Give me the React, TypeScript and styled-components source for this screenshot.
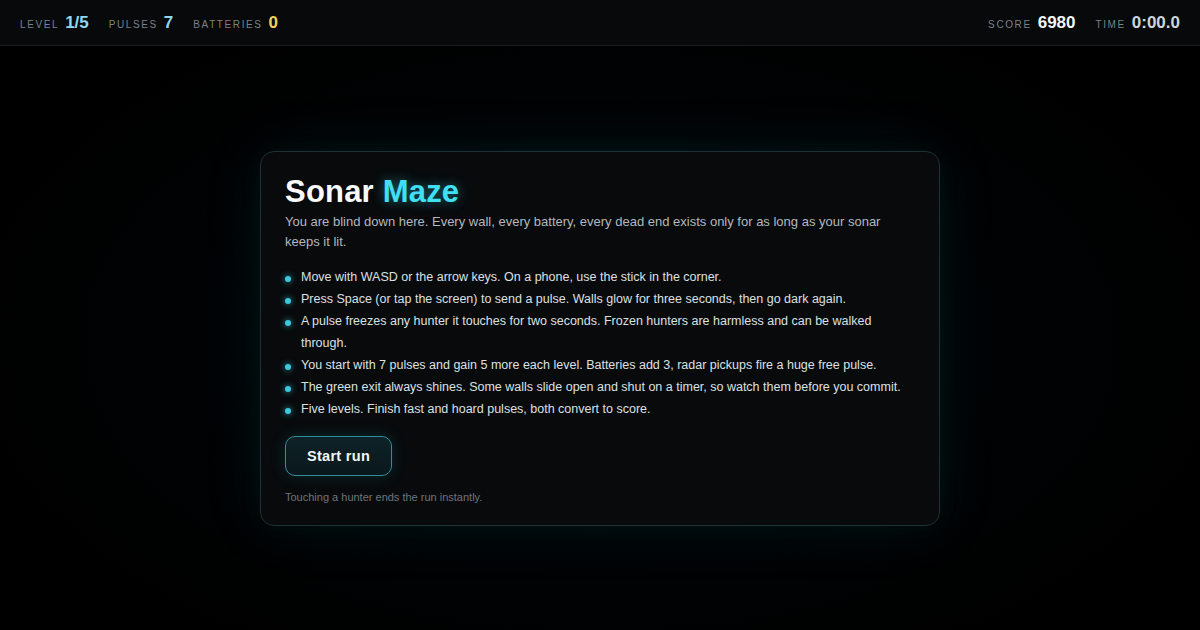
import styled, { createGlobalStyle } from 'styled-components';

const GlobalStyle = createGlobalStyle`
  html, body {
    margin: 0;
    padding: 0;
    height: 100%;
    background: #000;
  }
  body {
    font-family: "Liberation Sans", Arial, sans-serif;
    color: #e6e8ea;
  }
  #root {
    height: 100%;
  }
`;

const Page = styled.div`
  display: flex;
  flex-direction: column;
  height: 100vh;
  background: radial-gradient(ellipse at 50% 54%, #030a0c 0%, #010304 45%, #000 75%);
`;

const Hud = styled.header`
  display: flex;
  align-items: center;
  justify-content: space-between;
  height: 45px;
  padding: 0 20px;
  background: #07090b;
  border-bottom: 1px solid #1a1e22;
  flex-shrink: 0;
`;

const HudGroup = styled.div`
  display: flex;
  align-items: baseline;
  gap: 20px;
`;

const Stat = styled.div`
  display: flex;
  align-items: baseline;
  gap: 6px;
`;

const StatLabel = styled.span`
  font-size: 10px;
  letter-spacing: 1.6px;
  text-transform: uppercase;
  color: #7b8188;
`;

const StatValue = styled.span<{ $tone: 'cyan' | 'gold' | 'white' | 'soft' }>`
  font-size: 17px;
  font-weight: 700;
  color: ${(p) =>
    p.$tone === 'cyan' ? '#8ed8f2' : p.$tone === 'gold' ? '#f5cf5a' : p.$tone === 'white' ? '#f4f6f8' : '#cfd5db'};
`;

const Stage = styled.main`
  flex: 1;
  display: flex;
  align-items: center;
  justify-content: center;
`;

const Card = styled.section`
  width: 680px;
  box-sizing: border-box;
  padding: 22px 24px 21px;
  background: rgba(8, 10, 12, 0.96);
  border: 1px solid #1e3134;
  border-radius: 14px;
  box-shadow: 0 0 60px rgba(20, 140, 160, 0.12), 0 0 24px rgba(20, 140, 160, 0.06);
`;

const Title = styled.h1`
  margin: 0;
  font-size: 31px;
  line-height: 36px;
  font-weight: 700;
  letter-spacing: 0.2px;
  color: #fafafa;
`;

const Accent = styled.span`
  color: #3fe0f4;
  text-shadow: 0 0 12px rgba(63, 224, 244, 0.45);
`;

const Lead = styled.p`
  margin: 2px 0 14px;
  font-size: 13px;
  line-height: 20px;
  color: #b4b8bd;
`;

const Rules = styled.ul`
  list-style: none;
  margin: 0;
  padding: 0;
`;

const Rule = styled.li`
  position: relative;
  padding-left: 16px;
  font-size: 12.5px;
  line-height: 22px;
  color: #dde0e3;

  &::before {
    content: '';
    position: absolute;
    left: 0;
    top: 10px;
    width: 6px;
    height: 6px;
    border-radius: 50%;
    background: #3cc9dc;
    box-shadow: 0 0 6px rgba(60, 201, 220, 0.8);
  }
`;

const StartButton = styled.button`
  margin-top: 16px;
  width: 107px;
  height: 40px;
  border-radius: 10px;
  border: 1px solid #2c8f9a;
  background: linear-gradient(180deg, #0e2227 0%, #0a181c 100%);
  color: #f2f6f7;
  font-family: inherit;
  font-size: 14.5px;
  font-weight: 700;
  letter-spacing: 0.3px;
  cursor: pointer;
  box-shadow: 0 0 16px rgba(40, 180, 200, 0.18);
`;

const Footnote = styled.p`
  margin: 14px 0 0;
  font-size: 11px;
  line-height: 14px;
  color: #6f757b;
`;

const rules = [
  'Move with WASD or the arrow keys. On a phone, use the stick in the corner.',
  'Press Space (or tap the screen) to send a pulse. Walls glow for three seconds, then go dark again.',
  'A pulse freezes any hunter it touches for two seconds. Frozen hunters are harmless and can be walked through.',
  'You start with 7 pulses and gain 5 more each level. Batteries add 3, radar pickups fire a huge free pulse.',
  'The green exit always shines. Some walls slide open and shut on a timer, so watch them before you commit.',
  'Five levels. Finish fast and hoard pulses, both convert to score.',
];

const App = () => {
  return (
    <>
      <GlobalStyle />
      <Page>
        <Hud>
          <HudGroup>
            <Stat>
              <StatLabel>Level</StatLabel>
              <StatValue $tone="cyan">1/5</StatValue>
            </Stat>
            <Stat>
              <StatLabel>Pulses</StatLabel>
              <StatValue $tone="cyan">7</StatValue>
            </Stat>
            <Stat>
              <StatLabel>Batteries</StatLabel>
              <StatValue $tone="gold">0</StatValue>
            </Stat>
          </HudGroup>
          <HudGroup>
            <Stat>
              <StatLabel>Score</StatLabel>
              <StatValue $tone="white">6980</StatValue>
            </Stat>
            <Stat>
              <StatLabel>Time</StatLabel>
              <StatValue $tone="soft">0:00.0</StatValue>
            </Stat>
          </HudGroup>
        </Hud>
        <Stage>
          <Card>
            <Title>
              Sonar <Accent>Maze</Accent>
            </Title>
            <Lead>
              You are blind down here. Every wall, every battery, every dead end exists only for as long as your sonar
              keeps it lit.
            </Lead>
            <Rules>
              {rules.map((r) => (
                <Rule key={r}>{r}</Rule>
              ))}
            </Rules>
            <StartButton>Start run</StartButton>
            <Footnote>Touching a hunter ends the run instantly.</Footnote>
          </Card>
        </Stage>
      </Page>
    </>
  );
};

export default App;
